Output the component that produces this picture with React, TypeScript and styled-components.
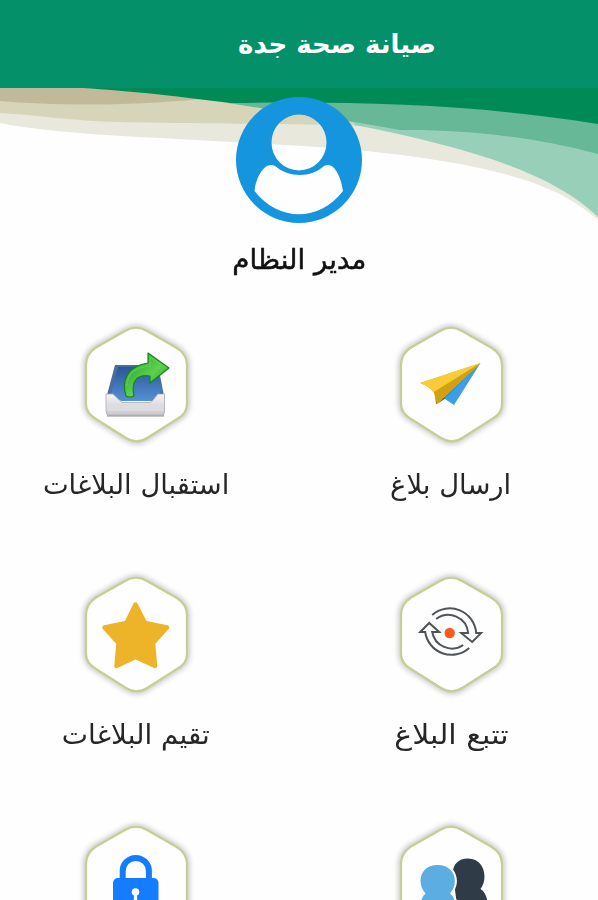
import React from "react";
import styled, { createGlobalStyle } from "styled-components";

const GlobalStyle = createGlobalStyle`
  body { margin: 0; background: #fefefe; overflow: hidden; }
`;

const Screen = styled.main`
  display: flex;
  flex-direction: column;
  height: 900px;
  overflow: hidden;
  position: relative;
  font-family: "DejaVu Sans", "Noto Sans", sans-serif;
`;

const Header = styled.header`
  display: flex;
  flex: none;
  align-items: center;
  justify-content: center;
  box-sizing: border-box;
  height: 88px;
  padding-left: 76px;
  background: #049069;
`;

const Title = styled.h1`
  margin: 0;
  white-space: nowrap;
  font-size: 26px;
  line-height: 36px;
  font-weight: 700;
  color: #fff;
`;

const Label = styled.span<{ $stretch?: number; $strong?: boolean }>`
  display: block;
  white-space: nowrap;
  line-height: 36px;
  font-size: 27px;
  color: ${(p) => (p.$strong ? "#111" : "#262626")};
  -webkit-text-stroke: ${(p) => (p.$strong ? "0.5px #111" : "0")};
  transform: scaleX(${(p) => p.$stretch ?? 1});
`;

const Waves = styled.svg`
  position: absolute;
  top: 88px;
  left: 0;
`;

const Profile = styled.section`
  position: relative;
  flex: none;
  display: flex;
  flex-direction: column;
  align-items: center;
  height: 234px;
  padding-top: 9px;
  box-sizing: border-box;
  gap: 19px;
`;

const Avatar = styled.svg`
  display: block;
  flex: none;
`;

const Menu = styled.nav`
  display: grid;
  flex: none;
  grid-template-columns: 240px 240px;
  grid-auto-rows: 249.5px;
  column-gap: 75px;
  padding-left: 16px;
`;

const Tile = styled.div`
  display: flex;
  flex-direction: column;
  align-items: center;
  gap: 19px;
`;

const Badge = styled.svg`
  display: block;
  flex: none;
  overflow: visible;
`;

const HEX =
  "M49 9Q60 2.500 71 9L100 25.500Q111 32 111 43V82Q111 92 101 97L72 115.500Q61 123 50 116L20 97Q10 91 10 82V43Q10 32 20 25.500Z";

function Hexagon({ children }: { children: React.ReactNode }) {
  return (
    <Badge width="120" height="126" viewBox="0 0 120 126">
      <path d={HEX} fill="none" stroke="#9a9a9a" strokeWidth="6" opacity=".5" filter="url(#soft)" />
      <path d={HEX} fill="#fefefe" stroke="#c3cf93" strokeWidth="2.200" />
      {children}
    </Badge>
  );
}

const icons = {
  send: (
    <g transform="translate(-7 0)">
      <path d="M96.500 41L70 83L61 77L53 82Z" fill="#3b9fe8" />
      <path d="M96.500 41L61 76L57 72Z" fill="#2787c8" />
      <path d="M51 69L61 76L52 82Z" fill="#2f4656" />
      <path d="M36 61L96.500 41L53 82L50 71Q45 64 36 61Z" fill="#e5b91e" />
      <path d="M36 61L96.500 41L50 70Q45 64 36 61Z" fill="#f8cc38" />
      <path d="M96.500 41L50 70L53 82Z" fill="#d2a112" />
    </g>
  ),
  receive: (
    <g>
      <defs>
        <linearGradient id="tray" x2="0" y2="1">
          <stop stopColor="#f4f4f6" /><stop offset="1" stopColor="#c9c9ce" />
        </linearGradient>
        <linearGradient id="leaf" x2="1" y2="1">
          <stop stopColor="#1a961d" /><stop offset=".55" stopColor="#5ed151" /><stop offset="1" stopColor="#128617" />
        </linearGradient>
        <linearGradient id="paper" x2="0" y2="1">
          <stop stopColor="#2b5798" /><stop offset="1" stopColor="#5390d4" />
        </linearGradient>
      </defs>
      <path d="M31 93.500H88" stroke="#555" strokeWidth="2.500" opacity=".45" />
      <path d="M39 43H82L88 74V78H31V73Z" fill="#476e9e" />
      <path d="M42 45H79L86 68L77 79H45L35 71Z" fill="url(#paper)" />
      <path d="M30 72H37L46 80.500H75L82 72H88.500V89Q88.500 93 86 93H33Q30 93 30 89Z" fill="url(#tray)" stroke="#aaaab0" strokeWidth=".8" />
      <path d="M31.500 82H87.500V89H31.500Z" fill="#dddde0" />
      <path d="M50 74C45 58 52 44 72 41V31L93 46L74 61V54C60 52 55 60 58 74Q54 76 50 74Z" fill="url(#leaf)" stroke="#168518" strokeWidth="1.200" strokeLinejoin="round" />
      <path d="M51 64C51 51 58 46 74 43.500V35L84 42" fill="none" stroke="#62cc5c" strokeWidth="2" opacity=".65" />
    </g>
  ),
  follow: (
    <g fill="none" stroke="#505559" strokeWidth="2" strokeLinejoin="miter" transform="translate(-.8 0)">
      <path d="M42 43A26.500 26.500 0 0 1 86 61H91L82 70L71 61H78A20 20 0 0 0 46 47" />
      <path d="M79 76A26.500 26.500 0 0 1 35 60H30L39 51L49 60H42A20 20 0 0 0 73 73" />
      <circle cx="59.500" cy="61" r="5.200" fill="#f75b1f" stroke="none" />
    </g>
  ),
  rate: (
    <path d="M59.500 32.500L69 51L91 55.500L77 71L79 94L59.500 85L40.500 94L42.500 71L28.500 55.500L50.500 51Z" fill="#edb42a" stroke="#edb42a" strokeWidth="4.500" strokeLinejoin="round" />
  ),
  lock: (
    <g>
      <path d="M46.700 60V50A13.100 13.100 0 0 1 72.900 50V60" fill="none" stroke="#157cff" strokeWidth="6" />
      <rect x="37" y="57" width="45.500" height="38" rx="5" fill="#157cff" />
      <circle cx="59.500" cy="71" r="3.800" fill="#fff" /><path d="M58.200 71H60.800L61.500 84H57.500Z" fill="#fff" />
    </g>
  ),
  users: (
    <g>
      <path d="M77 37.500C66 37.500 61 45 62 54L66 84H97Q96 72 89.500 68C97 59 94.500 37.500 77 37.500Z" fill="#2f3c48" />
      <path d="M46.700 44C29 44 25 62 34.500 72.500Q31 75 29 84H65Q63 75 59 72.500C68.500 62 64 44 46.700 44Z" fill="none" stroke="#fefefe" strokeWidth="4" />
      <path d="M46.700 44C29 44 25 62 34.500 72.500Q31 75 29 84H65Q63 75 59 72.500C68.500 62 64 44 46.700 44Z" fill="#5cade2" />
    </g>
  ),
};

type IconName = keyof typeof icons;
const tiles: { icon: IconName; text?: string; stretch?: number }[] = [
  { icon: "receive", text: "استقبال البلاغات", stretch: 1.012 },
  { icon: "send", text: "ارسال بلاغ", stretch: 1.015 },
  { icon: "rate", text: "تقيم البلاغات", stretch: 1.03 },
  { icon: "follow", text: "تتبع البلاغ", stretch: 1.11 },
  { icon: "lock" },
  { icon: "users" },
];

export default function App() {
  return (
    <Screen>
      <GlobalStyle />
      <Header>
        <Title dir="rtl">صيانة صحة جدة</Title>
      </Header>
      <Waves width="598" height="140" viewBox="0 88 598 140">
        <path d="M0 86H598V220C560 186 510 174 460 164C370 148 300 146 250 143C150 137 60 135 0 123Z" fill="#e8e8dc" />
        <path d="M0 86H300L360 126C290 123 180 124 120 122C70 121 40 115 0 113Z" fill="#d6d4b9" />
        <path d="M0 86H250L200 99C120 107 50 105 0 101Z" fill="#c0ba9a" />
        <path d="M340 100L598 120V217C550 170 460 146 355 125Z" fill="#98cfb8" />
        <path d="M228 103C370 96 500 108 598 121V154C530 136 460 129 400 130C345 120 290 113 228 103Z" fill="#66b896" />
        <path d="M66 87H598V124C480 105 370 101 230 103C160 94 120 90 66 87Z" fill="#008a55" />
      </Waves>
      <Profile>
        <Avatar width="126" height="126" viewBox="0 0 126 126">
          <path fillRule="evenodd" d="M63 0A63 63 0 1 1 63 126A63 63 0 1 1 63 0ZM63 17.500A27.500 28 0 1 0 63 73.500A27.500 28 0 1 0 63 17.500Z" fill="#1695df" />
          <path d="M39 69C29 64 20 80 18.500 94C43 125 83 125 107 94C105 80 98 64 88 69C75 81 53 81 39 69Z" fill="#fefefe" />
        </Avatar>
        <Label dir="rtl" $strong $stretch={1.025}>مدير النظام</Label>
      </Profile>
      <Menu dir="ltr">
        {tiles.map((t) => (
          <Tile key={t.icon}>
            <Hexagon>{icons[t.icon]}</Hexagon>
            {t.text && <Label dir="rtl" $stretch={t.stretch}>{t.text}</Label>}
          </Tile>
        ))}
      </Menu>
      <svg width="0" height="0" aria-hidden="true">
        <defs><filter id="soft" x="-20%" y="-20%" width="140%" height="140%"><feGaussianBlur stdDeviation="2.800" /></filter></defs>
      </svg>
    </Screen>
  );
}
